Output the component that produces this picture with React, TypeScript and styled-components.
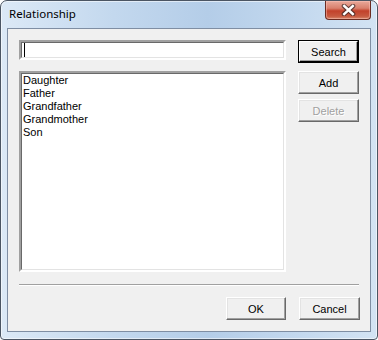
import React from 'react';
import styled, { createGlobalStyle } from 'styled-components';

const GlobalStyle = createGlobalStyle`
    html, body {
        margin: 0;
        padding: 0;
        background: #ffffff;
    }
    body {
        font-family: "Liberation Sans", Arial, sans-serif;
        font-size: 11px;
    }
`

const Window = styled.div`
    width: 378px;
    height: 340px;
    box-sizing: border-box;
    border: 1px solid #4b5563;
    border-radius: 7px 7px 4px 4px;
    background: linear-gradient(90deg, #dce9f6 0%, #c3d8ee 30%, #b4cde8 55%, #c4d9ef 80%, #d3e3f3 100%);
    box-shadow: inset 0 0 0 1px rgba(255, 255, 255, 0.55);
    display: flex;
    flex-direction: column;
    overflow: hidden;
`

const TitleBar = styled.div`
    height: 27px;
    display: flex;
    align-items: flex-start;
    justify-content: space-between;
    padding-left: 8px;
    padding-right: 6px;
`

const Title = styled.span`
    font-family: "Noto Sans", "Open Sans", sans-serif;
    font-size: 11.5px;
    color: #000000;
    margin-top: 5px;
`

const CloseButton = styled.div`
    width: 46px;
    height: 19px;
    box-sizing: border-box;
    border: 1px solid #6b2c22;
    border-top: none;
    border-radius: 0 0 4px 4px;
    background: linear-gradient(180deg, #e9a99b 0%, #d9806d 40%, #c2412b 55%, #c75a40 85%, #d88a6e 100%);
    box-shadow: inset 0 0 0 1px rgba(255, 200, 190, 0.45);
    display: flex;
    align-items: center;
    justify-content: center;
`

const Client = styled.div`
    flex: 1;
    margin: 0 6px 7px 6px;
    border: 1px solid #7f8ea3;
    background: #f0f0f0;
    padding: 11px 10px 10px 11px;
    display: flex;
    flex-direction: column;
`

const MainGrid = styled.div`
    display: grid;
    grid-template-columns: 267px 61px;
    grid-template-rows: 23px 201px;
    column-gap: 12px;
    row-gap: 8px;
`

const Sunken = styled.div`
    box-sizing: border-box;
    background: #ffffff;
    border-style: solid;
    border-width: 2px;
    border-color: #a0a0a0 #ffffff #ffffff #a0a0a0;
    position: relative;
    &::before {
        content: "";
        position: absolute;
        inset: 0;
        border-style: solid;
        border-width: 1px;
        border-color: #696969 #e3e3e3 #e3e3e3 #696969;
        pointer-events: none;
    }
`

const EditBox = styled(Sunken)`
    height: 20px;
    display: flex;
    align-items: center;
    padding-left: 3px;
`

const Caret = styled.span`
    width: 1px;
    height: 14px;
    background: #000000;
`

const ListBox = styled(Sunken)`
    padding: 1px 2px;
    display: flex;
    flex-direction: column;
`

const ListItem = styled.div`
    height: 13px;
    line-height: 13px;
    color: #000000;
    white-space: nowrap;
`

const ButtonColumn = styled.div`
    display: flex;
    flex-direction: column;
    gap: 5px;
`

const Button = styled.div<{ $default?: boolean; $disabled?: boolean; $w?: number }>`
    width: ${p => p.$w ?? 61}px;
    height: 23px;
    box-sizing: border-box;
    background: #f0f0f0;
    border-style: solid;
    border-width: ${p => p.$default ? '2px' : '1px'};
    border-color: ${p => p.$default ? '#ffffff #000000 #000000 #ffffff' : '#ffffff #696969 #696969 #ffffff'};
    outline: ${p => p.$default ? '1px solid #000000' : 'none'};
    outline-offset: -1px;
    box-shadow: ${p => p.$default ? 'inset -1px -1px 0 #a0a0a0' : 'inset -1px -1px 0 #a0a0a0, inset 1px 1px 0 #e3e3e3'};
    display: flex;
    align-items: center;
    justify-content: center;
    color: ${p => p.$disabled ? '#a0a0a0' : '#000000'};
    text-shadow: ${p => p.$disabled ? '1px 1px 0 #ffffff' : 'none'};
    font-size: 11px;
`

const Separator = styled.div`
    width: 340px;
    height: 0;
    margin-top: 12px;
    border-top: 1px solid #a0a0a0;
    border-bottom: 1px solid #ffffff;
`

const Footer = styled.div`
    display: flex;
    justify-content: flex-end;
    gap: 13px;
    margin-top: 11px;
`

const relations = ['Daughter', 'Father', 'Grandfather', 'Grandmother', 'Son'];

const CloseGlyph = () => (
    <svg width="15" height="12" viewBox="0 0 15 12">
        <path d="M3 2 L12 10 M12 2 L3 10"
            stroke="#3a2624" strokeWidth="4.6" strokeLinecap="round" fill="none" opacity="0.75" />
        <path d="M3.2 2 L11.8 10 M11.8 2 L3.2 10" stroke="#ffffff" strokeWidth="2.4" strokeLinecap="square" fill="none" />
    </svg>
);

export default function App() {
    return (
        <>
            <GlobalStyle />
            <Window>
                <TitleBar>
                    <Title>Relationship</Title>
                    <CloseButton><CloseGlyph /></CloseButton>
                </TitleBar>
                <Client>
                    <MainGrid>
                        <EditBox><Caret /></EditBox>
                        <Button $default>Search</Button>
                        <ListBox>
                            {relations.map(r => <ListItem key={r}>{r}</ListItem>)}
                        </ListBox>
                        <ButtonColumn>
                            <Button>Add</Button>
                            <Button $disabled>Delete</Button>
                        </ButtonColumn>
                    </MainGrid>
                    <Separator />
                    <Footer>
                        <Button $w={60}>OK</Button>
                        <Button $w={61}>Cancel</Button>
                    </Footer>
                </Client>
            </Window>
        </>
    );
}
